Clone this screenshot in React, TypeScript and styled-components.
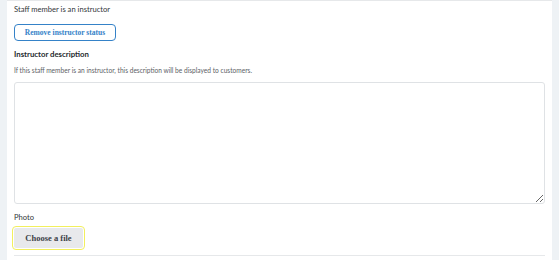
import styled, { createGlobalStyle } from "styled-components";

const GlobalStyle = createGlobalStyle`
  html, body {
    margin: 0;
    padding: 0;
    background: #eef2f5;
    font-family: Lato, "Liberation Sans", sans-serif;
  }
`;

const Page = styled.main`
  width: 559px;
  height: 260px;
  padding: 0 7px;
  box-sizing: border-box;
  overflow: hidden;
`;

const Panel = styled.section`
  background: #fff;
  border-top: 1px solid #e6e8ea;
  height: 100%;
  box-sizing: border-box;
  padding: 2px 7px 0 7px;
  display: flex;
  flex-direction: column;
`;

const Label = styled.div<{ bold?: boolean }>`
  margin-top: ${(p) => (p.bold ? "7px" : "0")};
  font-size: ${(p) => (p.bold ? "7.8px" : "7.6px")};
  font-weight: ${(p) => (p.bold ? 700 : 400)};
  color: ${(p) => (p.bold ? "#25292d" : "#33373b")};
  line-height: 12px;
  white-space: nowrap;
`;

const Hint = styled.div`
  font-size: 6.6px;
  color: #5c6166;
  line-height: 10px;
  margin-top: 5px;
  white-space: nowrap;
`;

const OutlineButton = styled.button`
  align-self: flex-start;
  margin-top: 9px;
  width: 102px;
  height: 17px;
  border: 1.5px solid #3582c8;
  border-radius: 4px;
  background: #fff;
  color: #3582c8;
  font-family: "Liberation Serif", "DejaVu Serif", serif;
  font-weight: 700;
  font-size: 7.5px;
  white-space: nowrap;
  padding: 0;
`;

const TextArea = styled.textarea`
  margin: 7px 0 0 0;
  width: 531px;
  height: 122px;
  box-sizing: border-box;
  border: 1px solid #dfe2e5;
  border-radius: 3px;
  resize: vertical;
  outline: none;
  display: block;
`;

const PhotoLabel = styled.div`
  margin-top: 7px;
  font-size: 7.6px;
  color: #33373b;
  line-height: 12px;
`;

const FileButton = styled.button`
  align-self: flex-start;
  margin-top: 5px;
  width: 69px;
  height: 20px;
  background: #e8e9ec;
  border: none;
  border-radius: 2px;
  outline: 1.5px solid #f2ef5e;
  outline-offset: 1.5px;
  color: #3d4147;
  font-family: "Liberation Serif", "DejaVu Serif", serif;
  font-weight: 700;
  font-size: 8.5px;
  white-space: nowrap;
  padding: 0;
`;

const Divider = styled.hr`
  margin: 7px 0 0 0;
  width: 531px;
  border: none;
  border-top: 1px solid #e6e8ea;
`;

export default function App() {
  return (
    <>
      <GlobalStyle />
      <Page>
        <Panel>
          <Label>Staff member is an instructor</Label>
          <OutlineButton type="button">Remove instructor status</OutlineButton>
          <Label bold>Instructor description</Label>
          <Hint>
            If this staff member is an instructor, this description will be
            displayed to customers.
          </Hint>
          <TextArea />
          <PhotoLabel>Photo</PhotoLabel>
          <FileButton type="button">Choose a file</FileButton>
          <Divider />
        </Panel>
      </Page>
    </>
  );
}
